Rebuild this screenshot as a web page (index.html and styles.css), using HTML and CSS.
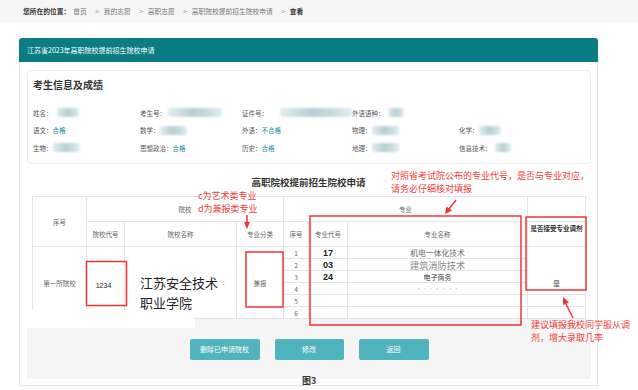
FILE: index.html
```html
<!DOCTYPE html>
<html lang="zh-CN">
<head>
  <meta charset="UTF-8">
  <meta name="viewport" content="width=device-width, initial-scale=1.0">
  <title>高职院校提前招生院校申请</title>
  <link rel="stylesheet" href="styles.css">
</head>
<body>
  <div class="page">
    <div class="crumbs">
      <b>您所在的位置：</b><span class="crumbs__first">首页</span><span class="crumbs__sep">&gt;</span>我的志愿<span class="crumbs__sep">&gt;</span>高职志愿<span class="crumbs__sep">&gt;</span>高职院校提前招生院校申请<span class="crumbs__sep">&gt;</span><b>查看</b>
    </div>

    <div class="panel">
      <div class="panel__head">江苏省2023年高职院校提前招生院校申请</div>
      <div class="panel__body">

        <div class="card">
          <h2 class="card__title">考生信息及成绩</h2>
          <div class="info">
            <div class="info__row">
              <div class="info__item">姓名：<span class="blur blur--s blur--gap"></span></div>
              <div class="info__item">考生号：<span class="blur blur--l"></span></div>
              <div class="info__item">证件号：<span class="blur blur--xl blur--far"></span></div>
              <div class="info__item">外语语种：<span class="blur blur--xs"></span></div>
              <div class="info__item"></div>
            </div>
            <div class="info__row">
              <div class="info__item">语文：<span class="ok">合格</span></div>
              <div class="info__item">数学：<span class="blur blur--m"></span></div>
              <div class="info__item">外语：<span class="ok">不合格</span></div>
              <div class="info__item">物理：<span class="blur blur--m"></span></div>
              <div class="info__item">化学：<span class="blur blur--s"></span></div>
            </div>
            <div class="info__row">
              <div class="info__item">生物：<span class="blur blur--m"></span></div>
              <div class="info__item">思想政治：<span class="ok">合格</span></div>
              <div class="info__item">历史：<span class="ok">合格</span></div>
              <div class="info__item">地理：<span class="blur blur--m"></span></div>
              <div class="info__item">信息技术：<span class="blur blur--xs"></span></div>
            </div>
          </div>
        </div>

        <div class="apply">
          <h3 class="apply__title">高职院校提前招生院校申请</h3>
          <table class="grid">
            <colgroup>
              <col class="grid__c1"><col class="grid__c2"><col class="grid__c3"><col class="grid__c4">
              <col class="grid__c5"><col class="grid__c6"><col class="grid__c7"><col class="grid__c8">
            </colgroup>
            <thead>
              <tr>
                <th rowspan="2">序号</th>
                <th colspan="3">院校</th>
                <th colspan="3">专业</th>
                <th></th>
              </tr>
              <tr>
                <th>院校代号</th>
                <th>院校名称</th>
                <th>专业分类</th>
                <th>序号</th>
                <th>专业代号</th>
                <th>专业名称</th>
                <th class="grid__top">是否接受专业调剂</th>
              </tr>
            </thead>
            <tbody>
              <tr>
                <td rowspan="6">第一所院校</td>
                <td rowspan="6" class="grid__num">1234</td>
                <td rowspan="6"></td>
                <td rowspan="6">兼报</td>
                <td>1</td>
                <td class="grid__code">17</td>
                <td class="grid__name">机电一体化技术</td>
                <td rowspan="4" class="grid__yes">是</td>
              </tr>
              <tr>
                <td>2</td>
                <td class="grid__code">03</td>
                <td class="grid__name grid__name--big">建筑消防技术</td>
              </tr>
              <tr>
                <td>3</td>
                <td class="grid__code">24</td>
                <td class="grid__name grid__name--small">电子商务</td>
              </tr>
              <tr>
                <td>4</td>
                <td></td>
                <td class="grid__faint">· · · ·&nbsp;&nbsp;· · ·</td>
              </tr>
              <tr><td>5</td><td></td><td></td><td></td></tr>
              <tr><td>6</td><td></td><td></td><td></td></tr>
            </tbody>
          </table>
        </div>

        <div class="actions">
          <button class="btn">删除已申请院校</button>
          <button class="btn btn--mid">修改</button>
          <button class="btn">返回</button>
        </div>
      </div>
    </div>

    <!-- pasted edits over the screenshot -->
    <div class="patch"></div>
    <div class="school">江苏安全技术<br>职业学院</div>
    <span class="school__rest">：</span>

    <div class="note note--kind">c为艺术类专业<br>d为兼报类专业</div>
    <div class="note note--code">对照省考试院公布的专业代号，是否与专业对应，<br>请务必仔细核对填报</div>
    <div class="note note--adjust">建议填报我校同学服从调<br>剂，增大录取几率</div>

    <svg class="marks" width="638" height="390" viewBox="0 0 638 390">
      <g fill="none" stroke="#ee3535" stroke-width="1.5">
        <rect x="86.5" y="261.5" width="40" height="44"/>
        <rect x="246" y="252" width="37" height="55"/>
        <rect x="310" y="216" width="211" height="109"/>
        <rect x="526" y="217" width="60" height="73"/>
        <line x1="247" y1="215" x2="247" y2="224"/>
        <line x1="456" y1="200" x2="449" y2="209"/>
        <line x1="573" y1="318" x2="566" y2="304"/>
      </g>
      <g fill="#ee3535">
        <polygon points="244,222 250,222 247,229"/>
        <polygon points="445,214 452,210.5 446.5,206.5"/>
        <polygon points="563,297 569,302.5 563,305"/>
      </g>
    </svg>

    <div class="caption">图3</div>
  </div>
</body>
</html>
```

FILE: styles.css
```css
*{
  box-sizing: border-box;
}
body{
  margin: 0;
  background: #fff;
  font-family: "Noto Sans CJK SC", "Noto Sans", sans-serif;
  color: #555;
}
.page{
  position: relative;
  width: 638px;
  height: 390px;
  overflow: hidden;
}

/* breadcrumb */
.crumbs{
  height: 22px;
  line-height: 23px;
  padding-left: 23px;
  background: #f6f6f6;
  font-size: 6.75px;
  color: #777;
  white-space: nowrap;
}
.crumbs b{
  color: #333;
}
.crumbs__first{
  margin-left: 3px;
}
.crumbs__sep{
  display: inline-block;
  width: 8.5px;
  margin-left: 8.5px;
}

/* panel */
.panel{
  width: 579px;
  margin: 16px 0 0 19px;
}
.panel__head{
  height: 24px;
  line-height: 25px;
  padding-left: 8px;
  background: #0a7c84;
  color: #fff;
  font-size: 7px;
  border-radius: 3px 3px 0 0;
}
.panel__body{
  border: 1px solid #e6e6e6;
  border-top: 0;
  padding: 8px 6px 6px 7px;
}

/* card with student info */
.card{
  height: 94px;
  padding: 8px 5px 0;
  border: 1px solid #e8efef;
  border-radius: 4px;
}
.card__title{
  margin: 0 0 13px;
  font-size: 10px;
  line-height: 12px;
  color: #333;
  font-weight: bold;
}
.info__row{
  display: grid;
  grid-template-columns: 107px 102px 110px 107px 1fr;
  height: 17.5px;
  align-items: center;
  font-size: 6.5px;
  color: #555;
}
.info__item{
  display: flex;
  align-items: center;
  white-space: nowrap;
}
.ok{
  color: #1b8c97;
}
.blur{
  display: inline-block;
  height: 9px;
  border-radius: 2px;
  background: linear-gradient(90deg, #e2eef1, #b7cfd6 45%, #c4dade 70%, #e2eef1);
  filter: blur(1px);
}
.blur--xs{ width: 16px; margin-left: 3px; }
.blur--s{ width: 22px; }
.blur--m{ width: 27px; }
.blur--l{ width: 54px; margin-left: 2px; }
.blur--xl{ width: 74px; }
.blur--gap{ margin-left: 4px; }
.blur--far{ margin-left: 12px; }

/* application table */
.apply{
  padding: 12px 6px 0 5px;
}
.apply__title{
  margin: 0 0 8px;
  text-align: center;
  font-size: 9.5px;
  line-height: 12px;
  color: #333;
  font-weight: bold;
}
.grid{
  width: 553px;
  border-collapse: collapse;
  table-layout: fixed;
  font-size: 6.5px;
  color: #666;
  text-align: center;
}
.grid th,
.grid td{
  border: 1px solid #e4e4e4;
  padding: 0;
  font-weight: normal;
  line-height: 10px;
}
.grid thead tr{
  height: 25px;
}
.grid tbody tr{
  height: 12px;
}
.grid__c1{ width: 54px; }
.grid__c2{ width: 38px; }
.grid__c3{ width: 112px; }
.grid__c4{ width: 47px; }
.grid__c5{ width: 25px; }
.grid__c6{ width: 39px; }
.grid__c7{ width: 180px; }
.grid__c8{ width: 58px; }
.grid th.grid__top{
  vertical-align: top;
  padding-top: 1px;
  color: #333;
  font-weight: bold;
}
.grid td.grid__num{
  padding: 6px 4px 0 0;
  font-family: "Liberation Sans", Arial, sans-serif;
  font-size: 7px;
  color: #222;
}
.grid td.grid__code{
  font-family: "Liberation Sans", Arial, sans-serif;
  font-size: 9px;
  line-height: 10px;
  font-weight: bold;
  color: #222;
}
.grid__name{
  font-size: 7.8px;
  color: #666;
}
.grid__name--big{
  font-size: 9.2px;
  color: #888;
}
.grid__name--small{
  font-size: 7px;
  color: #333;
  font-weight: 600;
}
.grid__faint{
  font-size: 5px;
  color: #bbb;
  vertical-align: top;
}
.grid td.grid__yes{
  vertical-align: bottom;
  padding-bottom: 6px;
  color: #333;
}

/* buttons */
.actions{
  height: 60px;
  background: #f5f5f5;
  display: flex;
  justify-content: center;
  align-items: center;
  gap: 15px;
}
.btn{
  width: 70px;
  height: 21px;
  border: 0;
  border-radius: 2px;
  background: #4fb4bd;
  color: #fff;
  font: 7px "Noto Sans CJK SC", sans-serif;
}
.btn--mid{
  width: 69px;
}

/* edits pasted over the screenshot */
.patch{
  position: absolute;
  left: 27px;
  top: 310px;
  width: 168px;
  height: 18px;
  background: #fff;
}
.school{
  position: absolute;
  left: 140px;
  top: 273px;
  font-size: 13px;
  line-height: 20px;
  color: #222;
  background: #fff;
}
.school__rest{
  position: absolute;
  left: 222px;
  top: 277px;
  font-size: 7px;
  color: #aaa;
}
.note{
  position: absolute;
  font-size: 9px;
  color: #f0403c;
  white-space: nowrap;
}
.note--kind{
  left: 198px;
  top: 189px;
  line-height: 13px;
}
.note--code{
  left: 391px;
  top: 170px;
  line-height: 12.5px;
}
.note--adjust{
  left: 531px;
  top: 318px;
  line-height: 13px;
}
.marks{
  position: absolute;
  left: 0;
  top: 0;
  pointer-events: none;
}
.caption{
  position: absolute;
  left: 302px;
  top: 375px;
  font-size: 9px;
  line-height: 12px;
  font-weight: bold;
  color: #333;
}
```
